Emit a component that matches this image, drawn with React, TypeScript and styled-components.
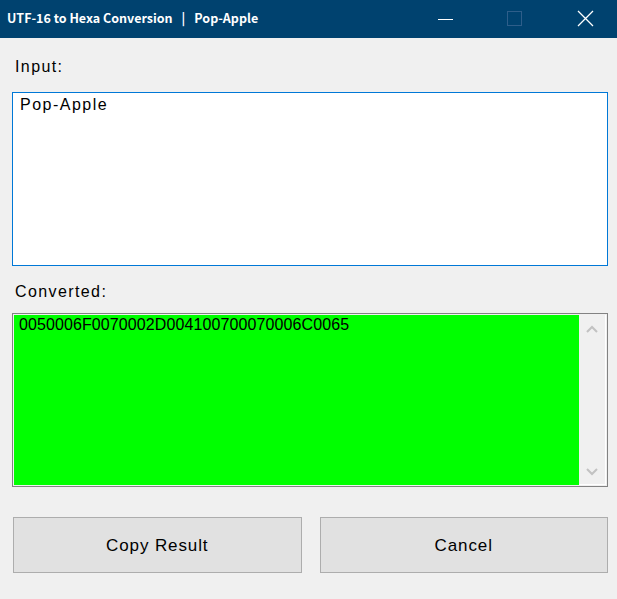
import React from "react";
import styled, { createGlobalStyle } from "styled-components";

const GlobalStyle = createGlobalStyle`
  html, body {
    margin: 0;
    padding: 0;
    background: #f0f0f0;
  }
`;

const Window = styled.div`
  width: 617px;
  height: 599px;
  display: flex;
  flex-direction: column;
  background: #f0f0f0;
  font-family: "Liberation Sans", Arial, sans-serif;
  color: #000;
  overflow: hidden;
`;

const TitleBar = styled.div`
  height: 38px;
  flex: 0 0 38px;
  background: #00426f;
  display: flex;
  align-items: center;
  padding-left: 7px;
`;

const Title = styled.div`
  flex: 1;
  color: #fff;
  font-family: "Noto Sans CJK JP", "Noto Sans", sans-serif;
  font-weight: 700;
  font-size: 12.5px;
  white-space: pre;
  margin-top: -4px;
`;

const Separator = styled.span`
  margin: 0 9px;
`;

const Controls = styled.div`
  display: flex;
  height: 100%;
`;

const ControlButton = styled.div<{ $shift?: number }>`
  width: 69px;
  display: flex;
  align-items: center;
  justify-content: center;
  margin-top: -2px;
  padding-left: ${(p) => (p.$shift ?? 0) * 2}px;
  box-sizing: border-box;
`;

const Body = styled.div`
  flex: 1;
  display: flex;
  flex-direction: column;
  padding: 0 9px 0 12px;
`;

const Label = styled.div<{ $top: number; $bottom: number }>`
  font-size: 16px;
  letter-spacing: 1.4px;
  height: 18px;
  padding-left: 3px;
  margin-top: ${(p) => p.$top}px;
  margin-bottom: ${(p) => p.$bottom}px;
`;

const InputBox = styled.div`
  height: 174px;
  box-sizing: border-box;
  border: 1px solid #0078d7;
  background: #fff;
  padding: 2px 7px;
  font-size: 16px;
  letter-spacing: 1.5px;
  line-height: 20px;
`;

const OutputBox = styled.div`
  height: 174px;
  box-sizing: border-box;
  border: 1px solid #828282;
  background: #f0f0f0;
  display: flex;
  padding: 1px;
`;

const OutputText = styled.div`
  flex: 1;
  background: #00ff00;
  padding: 1px 5px;
  font-size: 16px;
  letter-spacing: 0.1px;
  line-height: 18px;
`;

const ScrollBar = styled.div`
  width: 26px;
  display: flex;
  flex-direction: column;
  justify-content: space-between;
  align-items: center;
  padding: 10px 0 8px;
  border-right: 1px solid #fff;
  border-bottom: 1px solid #fff;
`;

const ButtonRow = styled.div`
  display: flex;
  gap: 18px;
  margin-top: 30px;
  padding-left: 1px;
`;

const Button = styled.div`
  flex: 1;
  height: 56px;
  box-sizing: border-box;
  background: #e1e1e1;
  border: 1px solid #adadad;
  display: flex;
  align-items: center;
  justify-content: center;
  font-size: 17px;
  letter-spacing: 0.9px;
  padding-top: 2px;
`;

const Chevron = ({ up }: { up?: boolean }) => (
  <svg width="12" height="8" viewBox="0 0 12 8">
    <path
      d={up ? "M1 7 L6 2 L11 7" : "M1 1 L6 6 L11 1"}
      fill="none"
      stroke="#c2c2c2"
      strokeWidth="2"
    />
  </svg>
);

export default function App() {
  return (
    <>
      <GlobalStyle />
      <Window>
        <TitleBar>
          <Title>
            UTF-16 to Hexa Conversion<Separator>|</Separator>Pop-Apple
          </Title>
          <Controls>
            <ControlButton>
              <svg width="16" height="16" viewBox="0 0 16 16">
                <path d="M1 9.5 H16" stroke="#fff" strokeWidth="1" />
              </svg>
            </ControlButton>
            <ControlButton>
              <svg width="16" height="16" viewBox="0 0 16 16">
                <rect x="1.5" y="1.5" width="14" height="14" fill="none" stroke="#2e5e8a" strokeWidth="1" />
              </svg>
            </ControlButton>
            <ControlButton $shift={3}>
              <svg width="17" height="17" viewBox="0 0 17 17">
                <path d="M1 1 L16 16 M16 1 L1 16" stroke="#fff" strokeWidth="1.3" />
              </svg>
            </ControlButton>
          </Controls>
        </TitleBar>
        <Body>
          <Label $top={20} $bottom={16}>Input:</Label>
          <InputBox>Pop-Apple</InputBox>
          <Label $top={17} $bottom={12}>Converted:</Label>
          <OutputBox>
            <OutputText>0050006F0070002D004100700070006C0065</OutputText>
            <ScrollBar>
              <Chevron up />
              <Chevron />
            </ScrollBar>
          </OutputBox>
          <ButtonRow>
            <Button>Copy Result</Button>
            <Button>Cancel</Button>
          </ButtonRow>
        </Body>
      </Window>
    </>
  );
}
